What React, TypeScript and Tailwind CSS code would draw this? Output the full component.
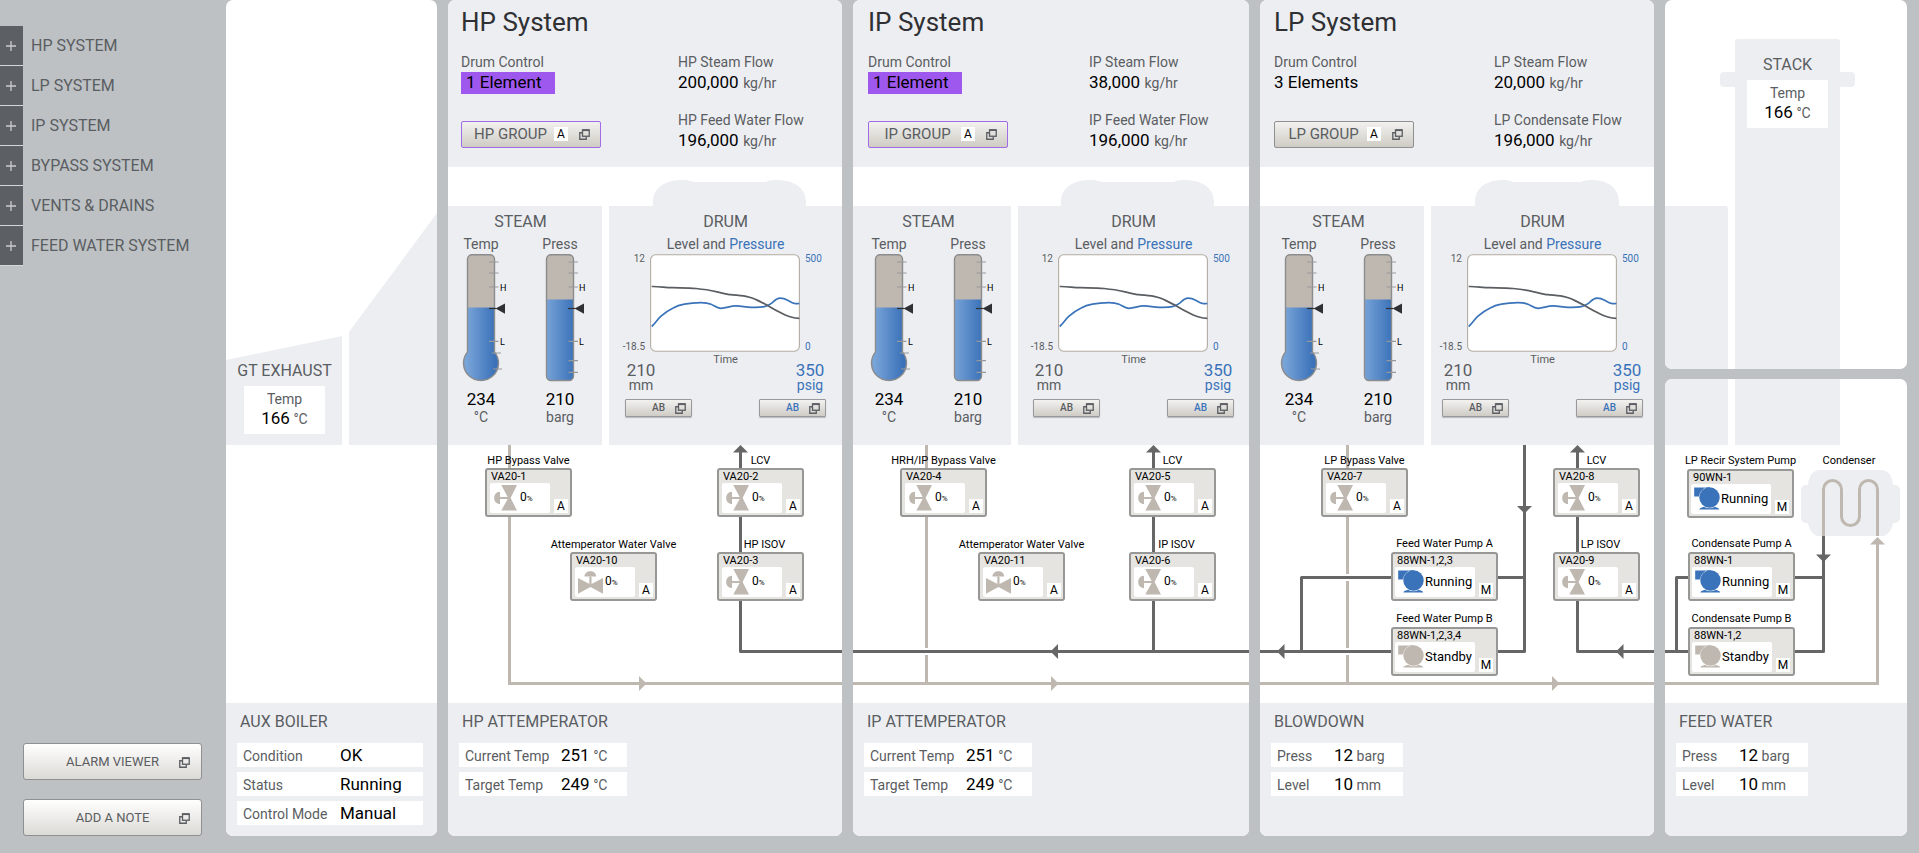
import { useId, type ReactNode } from "react";

const NAV = ["HP SYSTEM", "LP SYSTEM", "IP SYSTEM", "BYPASS SYSTEM", "VENTS & DRAINS", "FEED WATER SYSTEM"];

const TAN = "#bfb8b0";
const DARK = "#666667";
const BLUE = "#3a73b9";

/* ---------- icons ---------- */

function PopOut({ className = "size-[11px]" }: { className?: string }) {
  return (
    <svg viewBox="0 0 10 10" className={className} fill="none" stroke="#5c5f64" aria-hidden="true">
      <rect x="3.2" y="0.8" width="6.1" height="5.8" strokeWidth="1.2" />
      <path d="M3.2 1.1H9.3" strokeWidth="1.6" />
      <path d="M3 3.4H0.7V9.3H6.6V7" strokeWidth="1.2" />
    </svg>
  );
}

function ValveUpright() {
  return (
    <svg viewBox="0 0 23 26" className="ml-1 h-[26px] w-[23px] shrink-0" fill={TAN} aria-hidden="true">
      <path d="M7.3 0H23L16.6 12.9L23 25.6H7.3L14.2 12.9Z" />
      <path d="M6 6.8V19C2.4 18.8 0.2 16.4 0.2 12.9S2.4 7 6 6.8Z" />
      <path d="M6 12H15V14H6Z" />
    </svg>
  );
}

function ValveFlat() {
  return (
    <svg viewBox="0 0 25 23" className="ml-[3px] h-[23px] w-[25px] shrink-0" fill={TAN} aria-hidden="true">
      <path d="M0 7L12.5 13.6L25 7V22.8L12.5 16L0 22.8Z" />
      <path d="M6.4 5.6C6.6 2.2 9 0.2 12.4 0.2S18 2.2 18.2 5.6Z" />
      <path d="M11.3 5.6H13.5V15H11.3Z" />
    </svg>
  );
}

function PumpIcon({ on }: { on: boolean }) {
  return (
    <svg viewBox="0 0 26 23" className="ml-[3px] h-[23px] w-[26px] shrink-0" fill={on ? BLUE : TAN} aria-hidden="true">
      <path d="M0.2 0.4H15L6 9.4H0.2Z" />
      <path d="M5.4 22.4C5.4 21.2 8 20.6 10.6 19.6H20C22.6 20.6 25.2 21.2 25.2 22.4Z" />
      <circle cx="15.4" cy="10.7" r="10.6" fill="#ffffff" fillOpacity="0.8" />
      <circle cx="15.5" cy="10.5" r="10.2" />
      <path d="M12 0.4H16V2H12Z" />
    </svg>
  );
}

/* ---------- building blocks ---------- */

function Panel({ children, className = "" }: { children: ReactNode; className?: string }) {
  return <section className={`flex min-w-0 flex-col overflow-hidden rounded-[7px] bg-white ${className}`}>{children}</section>;
}

function TempBox() {
  return (
    <div className="flex h-12 w-[81px] flex-col items-center bg-white pt-[3px]">
      <span className="text-[14px] leading-5">Temp</span>
      <span className="text-[14px] leading-[18px]">
        <b className="text-[17px] font-normal text-black">166</b> °C
      </span>
    </div>
  );
}

function Reading({ label, value, unit, width, cols }: { label: string; value: string; unit?: string; width: string; cols: string }) {
  return (
    <div className={`grid h-6 items-center bg-white pl-[6px] ${width} ${cols}`}>
      <dt className="text-[14px] leading-6">{label}</dt>
      <dd className="text-[14px] leading-6">
        <b className="text-[17px] font-normal text-black">{value}</b>
        {unit ? ` ${unit}` : ""}
      </dd>
    </div>
  );
}

function Footer({ title, children }: { title: string; children: ReactNode }) {
  return (
    <div className="min-h-[133px] bg-[#edeef2] px-[11px] pt-[5px] pb-[9px]">
      <h2 className="pl-[3px] text-[16px] leading-7">{title}</h2>
      <dl className="mt-[7px] flex flex-col gap-[5px]">{children}</dl>
    </div>
  );
}

function Gauge({ kind }: { kind: "temp" | "press" }) {
  const id = useId();
  const temp = kind === "temp";
  const level = temp ? 53.5 : 45.5;
  const outline = temp
    ? "M11.5 97.9V5A4.5 4.5 0 0 1 16 0.8H34A4.5 4.5 0 0 1 38.5 5V97.9A17.5 17.5 0 1 1 11.5 97.9Z"
    : "M11.5 5A4.5 4.5 0 0 1 16 0.8H34A4.5 4.5 0 0 1 38.5 5V122A4.5 4.5 0 0 1 34 126.5H16A4.5 4.5 0 0 1 11.5 122Z";
  return (
    <svg viewBox="0 0 50 128" className="h-32 w-[50px] overflow-visible" aria-hidden="true">
      <defs>
        <linearGradient id={`${id}g`} x1="7" x2="43" y1="0" y2="0" gradientUnits="userSpaceOnUse">
          <stop offset="0.1" stopColor="#78a4d8" />
          <stop offset="0.9" stopColor="#3a71b8" />
        </linearGradient>
        <clipPath id={`${id}c`}>
          <path d={outline} />
        </clipPath>
      </defs>
      <g clipPath={`url(#${id}c)`}>
        <rect width="50" height="128" fill={TAN} />
        <rect y={level} width="50" height="90" fill={`url(#${id}g)`} />
      </g>
      <path d={outline} fill="none" stroke="#8b8c8e" strokeWidth="1.4" />
      <path
        d={temp ? "M33 8H42.5M33 19H42.5M33 33H42.5M33 87.3H42.5M36 99H45M37 115H46" : "M33.5 8H43M33.5 19H43M33.5 33H43M33.5 87.3H43M33.5 106.6H43M33.5 118.4H43"}
        stroke="#97989a"
        strokeWidth="1.2"
      />
      <path d="M33 54.5H40" stroke="#2f3032" strokeWidth="1.2" />
      <path d="M39.5 54.5L49 49.5V59.8Z" fill="#2f3032" />
      <text x="44" y="36.5" className="fill-black text-[9px]">H</text>
      <text x="44" y="90.5" className="fill-black text-[9px]">L</text>
    </svg>
  );
}

function GaugeColumn({ kind, label, value, unit }: { kind: "temp" | "press"; label: string; value: string; unit: string }) {
  return (
    <div className="flex w-[50px] flex-col items-center">
      <span className="text-[14px] leading-5">{label}</span>
      <Gauge kind={kind} />
      <span className="mt-[7px] text-[17px] leading-5 text-black">{value}</span>
      <span className="text-[14px] leading-4">{unit}</span>
    </div>
  );
}

function TrendButton({ blue }: { blue?: boolean }) {
  return (
    <button
      type="button"
      className="grid h-[18px] w-[67px] grid-cols-[1fr_auto_1fr] items-center rounded-[1px] border border-[#99989a] bg-linear-to-b from-[#f3f2f0] to-[#cfccc6] px-[5px] shadow-[0_1px_1px_#b9b9bb]"
    >
      <span />
      <span className={`text-[10px] leading-4 font-medium ${blue ? "text-[#3a73b9]" : ""}`}>AB</span>
      <PopOut className="size-[11px] justify-self-end" />
    </button>
  );
}

function Drum() {
  return (
    <div className="flex flex-1 flex-col items-center bg-[#edeef2] pt-1 pb-7">
      <h3 className="text-[16px] leading-6">DRUM</h3>
      <p className="text-[14px] leading-5">
        Level and <span className="text-[#3a73b9]">Pressure</span>
      </p>
      <div className="grid w-[201px] grid-cols-[20px_150px_21px] gap-x-[5px] text-[10px] leading-[10px]">
        <div className="flex flex-col items-end justify-between">
          <span>12</span>
          <span>-18.5</span>
        </div>
        <svg viewBox="0 0 150 98" className="h-[98px] w-[150px]" fill="none" role="img" aria-label="Level and pressure over time">
          <rect x="0.6" y="0.8" width="148.8" height="96.4" rx="5" fill="#ffffff" stroke="#b3aca1" strokeWidth="1.1" />
          <path
            d="M1.7 72.5C4.5 70 7.5 65.3 11 62.2C14.5 59 18.5 56.2 22.7 54.2C26.5 52.2 30 51 34.3 50.2C40 49 46 48.6 51 48.6C55 48.6 58 48.9 61 50.2C64.5 51.8 67 54.2 71 54.3C76 54.4 80 51.9 86 51.9C91 51.9 96 53.2 101 53.3C106 53.4 110 53.6 114.3 52.6C117 52 119 51 121 49.6C124 47.5 126 44.3 130 44.2C133.5 44.1 135.5 45.1 137.7 46.2C140 47.4 142 48.8 144.3 49.3C146 49.6 148 49.6 149.4 49.5"
            stroke="#3a73b9"
            strokeWidth="1.7"
          />
          <path
            d="M1.7 32.5C9 32.3 15 33.6 22.7 33.7C31 33.9 38 33.6 46 34.5C53 35.2 60 36.2 66 37.6C71 38.6 76 40.3 81 40.7C86 41 91 41.2 96 42.3C100 43.1 103 44.1 106 45.6C110 47.4 114 49.6 117.7 51.6C121.5 53.8 125 56 129.3 58C133 60 137 62 141 63C144 64 147 64.3 149.3 64.3"
            stroke="#5a5d61"
            strokeWidth="1.7"
          />
        </svg>
        <div className="flex flex-col justify-between text-[#3a73b9]">
          <span>500</span>
          <span>0</span>
        </div>
      </div>
      <div className="flex w-[201px] justify-between">
        <div className="flex w-8 flex-col items-center pt-[10px]">
          <span className="text-[17px] leading-4">210</span>
          <span className="text-[14px] leading-[14px]">mm</span>
        </div>
        <span className="text-[11px] leading-4">Time</span>
        <div className="flex w-8 flex-col items-center pt-[10px] text-[#3a73b9]">
          <span className="text-[17px] leading-4">350</span>
          <span className="text-[14px] leading-[14px]">psig</span>
        </div>
      </div>
      <div className="mt-[7px] flex w-[201px] justify-between">
        <TrendButton />
        <TrendButton blue />
      </div>
    </div>
  );
}

type SystemProps = {
  code: string;
  elements: string;
  alert?: boolean;
  steam: string;
  feedLabel: string;
  feed: string;
  headerCols: string;
  bodyCols: string;
  steamPad: string;
  bump: string;
  diagram: ReactNode;
  footer: ReactNode;
};

function Flow({ label, value }: { label: string; value: string }) {
  return (
    <div>
      <dt className="text-[14px] leading-5">{label}</dt>
      <dd className="text-[14px] leading-5">
        <b className="mr-px text-[17px] leading-5 font-normal text-black">{value}</b> kg/hr
      </dd>
    </div>
  );
}

function SystemPanel(p: SystemProps) {
  return (
    <Panel>
      <header className={`min-h-[167px] bg-[#edeef2] pt-[6px] ${p.headerCols}`}>
        <h1 className="col-span-2 mb-[14px] h-8 text-[26px] leading-8 text-[#2f3033]">{p.code} System</h1>
        <div className="flex flex-col items-start">
          <span className="text-[14px] leading-5">Drum Control</span>
          <span className={`h-[22px] text-[17px] leading-5 text-black ${p.alert ? "w-[94px] bg-[#9f58ee] pl-[5px]" : ""}`}>{p.elements}</span>
          <button
            type="button"
            className={`mt-[27px] flex h-[27px] w-[140px] items-center rounded-[2px] border bg-linear-to-b from-[#f2f1ef] to-[#cfccc5] pr-[10px] pb-px pl-[5px] ${
              p.alert ? "border-[#a16be8]" : "border-[#8f9092]"
            }`}
          >
            <span className="flex-1 text-[15px] leading-6">{p.code} GROUP</span>
            <span className="w-[14px] bg-white text-[12px] leading-[14px] text-black">A</span>
            <PopOut className="ml-[11px] size-[11px]" />
          </button>
        </div>
        <dl className="flex flex-col gap-[17px]">
          <Flow label={`${p.code} Steam Flow`} value={p.steam} />
          <Flow label={p.feedLabel} value={p.feed} />
        </dl>
      </header>
      <div className={`grid gap-x-[7px] ${p.bodyCols}`}>
        <div className={`mt-[39px] bg-[#edeef2] pt-1 pb-5 ${p.steamPad}`}>
          <div className="flex w-[129px] flex-col items-center">
            <h3 className="text-[16px] leading-6">STEAM</h3>
            <div className="flex w-full justify-between">
              <GaugeColumn kind="temp" label="Temp" value="234" unit="°C" />
              <GaugeColumn kind="press" label="Press" value="210" unit="barg" />
            </div>
          </div>
        </div>
        <div className="flex flex-col">
          <div className="flex h-[39px] items-end justify-center pl-2">
            <svg viewBox="0 0 153 26" preserveAspectRatio="none" className={`h-[26px] ${p.bump}`} aria-hidden="true">
              <path d="M0 26V22C0 8 12 0.3 28 0C34 0 38 0.6 40 2H113C115 0.6 119 0 125 0C141 0.3 153 8 153 22V26Z" fill="#edeef2" />
            </svg>
          </div>
          <Drum />
        </div>
      </div>
      {p.diagram}
      {p.footer}
    </Panel>
  );
}

/* ---------- process diagram ---------- */

function Canvas({ pipes, children }: { pipes: ReactNode; children: ReactNode }) {
  return (
    <div className="relative h-[258px] overflow-hidden">
      <svg className="absolute inset-0 size-full" fill="none" strokeWidth="3" aria-hidden="true">
        {pipes}
      </svg>
      {children}
    </div>
  );
}

type NodeProps = { pos: string; label: string; tag: string; labelPad?: string };

function Valve({ pos, label, tag, flat, labelPad = "" }: NodeProps & { flat?: boolean }) {
  return (
    <div className={`absolute flex w-[87px] flex-col items-center ${pos}`}>
      <span className={`text-[11px] leading-[15px] whitespace-nowrap text-black ${labelPad}`}>{label}</span>
      <button type="button" className="grid h-[49px] w-full grid-cols-[60px_14px] grid-rows-[13px_30px] content-start justify-between rounded-[3px] border-2 border-[#979795] bg-[#e5e4e0] pr-[2px] pl-[3px] text-left text-black">
        <span className="col-span-2 pl-px text-[11px] leading-[13px]">{tag}</span>
        <span className="flex items-center rounded-[2px] bg-white">
          {flat ? <ValveFlat /> : <ValveUpright />}
          <span className={`text-[12px] leading-4 ${flat ? "ml-[2px]" : "ml-[3px]"}`}>
            0<small className="text-[8px]">%</small>
          </span>
        </span>
        <span className="self-end bg-white text-center text-[12px] leading-[14px]">A</span>
      </button>
    </div>
  );
}

function Pump({ pos, label, tag, on }: NodeProps & { on: boolean }) {
  return (
    <div className={`absolute flex w-[107px] flex-col items-center ${pos}`}>
      <span className="mb-px text-[11px] leading-[15px] whitespace-nowrap text-black">{label}</span>
      <button type="button" className="grid h-[49px] w-full grid-cols-[80px_14px] grid-rows-[13px_30px] content-start justify-between rounded-[3px] border-2 border-[#979795] bg-[#e5e4e0] pr-[3px] pl-[2px] text-left text-black">
        <span className="col-span-2 pl-[2px] text-[11px] leading-[13px]">{tag}</span>
        <span className="flex items-center rounded-[2px] bg-white pb-px">
          <PumpIcon on={on} />
          <span className="ml-px text-[13px] leading-4">{on ? "Running" : "Standby"}</span>
        </span>
        <span className="self-end bg-white text-center text-[12px] leading-[14px]">M</span>
      </button>
    </div>
  );
}

function HpDiagram() {
  return (
    <Canvas
      pipes={
        <>
          <path d="M61.5 0V238.5H3000" stroke={TAN} />
          <path d="M191 231L198.5 238.5L191 246Z" fill={TAN} />
          <path d="M292.5 4V206.5H3000" stroke={DARK} strokeLinejoin="round" />
          <path d="M292.5 0L300 7.5H285Z" fill={DARK} />
        </>
      }
    >
      <Valve pos="left-[37px] top-[8px]" label="HP Bypass Valve" tag="VA20-1" />
      <Valve pos="left-[122px] top-[92px]" label="Attemperator Water Valve" tag="VA20-10" flat />
      <Valve pos="left-[269px] top-[8px]" label="LCV" tag="VA20-2" />
      <Valve pos="left-[269px] top-[92px]" label="HP ISOV" tag="VA20-3" labelPad="pl-[8px]" />
    </Canvas>
  );
}

function IpDiagram() {
  return (
    <Canvas
      pipes={
        <>
          <path d="M73.5 0V203M73.5 210V238M0 238.5H3000" stroke={TAN} />
          <path d="M198 231L205.5 238.5L198 246Z" fill={TAN} />
          <path d="M0 206.5H3000M300.5 4V206" stroke={DARK} />
          <path d="M300.5 0L308 7.5H293Z" fill={DARK} />
          <path d="M205 199V214L197.5 206.5Z" fill={DARK} />
        </>
      }
    >
      <Valve pos="left-[47px] top-[8px]" label="HRH/IP Bypass Valve" tag="VA20-4" />
      <Valve pos="left-[125px] top-[92px]" label="Attemperator Water Valve" tag="VA20-11" flat />
      <Valve pos="left-[276px] top-[8px]" label="LCV" tag="VA20-5" />
      <Valve pos="left-[276px] top-[92px]" label="IP ISOV" tag="VA20-6" labelPad="pl-[8px]" />
    </Canvas>
  );
}

function LpDiagram() {
  return (
    <Canvas
      pipes={
        <>
          <path d="M87.5 0V129M87.5 136V203M87.5 210V238M0 238.5H3000" stroke={TAN} />
          <path d="M292 231L299.5 238.5L292 246Z" fill={TAN} />
          <path d="M0 206.5H264.5V0M41.5 206V132.5H264M317.5 4V206.5H3000" stroke={DARK} strokeLinejoin="round" />
          <path d="M317.5 0L325 7.5H310Z" fill={DARK} />
          <path d="M257 61H272L264.5 68.5Z" fill={DARK} />
          <path d="M24.5 199V214L17 206.5Z" fill={DARK} />
          <path d="M363.5 199V214L356 206.5Z" fill={DARK} />
        </>
      }
    >
      <Valve pos="left-[61px] top-[8px]" label="LP Bypass Valve" tag="VA20-7" />
      <Pump pos="left-[131px] top-[91px]" label="Feed Water Pump A" tag="88WN-1,2,3" on />
      <Pump pos="left-[131px] top-[166px]" label="Feed Water Pump B" tag="88WN-1,2,3,4" on={false} />
      <Valve pos="left-[293px] top-[8px]" label="LCV" tag="VA20-8" />
      <Valve pos="left-[293px] top-[92px]" label="LP ISOV" tag="VA20-9" labelPad="pl-[8px]" />
    </Canvas>
  );
}

function CondenserDiagram() {
  return (
    <Canvas
      pipes={
        <>
          <rect x="136" y="40" width="99" height="38" rx="5" fill="#edeef2" />
          <path d="M153 25H218C225 27 227 32 228 40V78C227 84 224 89 219 91H152C147 89 144 84 143 78V40C144 32 146 27 153 25Z" fill="#edeef2" />
          <path d="M158.5 91V44.5A9 9 0 0 1 176.5 44.5V71.5A9 9 0 0 0 194.5 71.5V44.5A9 9 0 0 1 212.5 44.5V91" stroke={TAN} />
          <path d="M0 238.5H212.5V98" stroke={TAN} />
          <path d="M212.5 92L220 99.5H205Z" fill={TAN} />
          <path d="M158.5 91V206.5H0M158.5 132.5H11.5V206" stroke={DARK} strokeLinejoin="round" />
          <path d="M151 109.5H166L158.5 117Z" fill={DARK} />
        </>
      }
    >
      <Pump pos="left-[22px] top-[8px]" label="LP Recir System Pump" tag="90WN-1" on />
      <Pump pos="left-[23px] top-[91px]" label="Condensate Pump A" tag="88WN-1" on />
      <Pump pos="left-[23px] top-[166px]" label="Condensate Pump B" tag="88WN-1,2" on={false} />
      <span className="absolute top-[8px] left-[136px] w-[96px] text-center text-[11px] leading-[15px] text-black">Condenser</span>
    </Canvas>
  );
}

/* ---------- page ---------- */

function SideButton({ children }: { children: ReactNode }) {
  return (
    <button
      type="button"
      className="grid h-[37px] w-[179px] grid-cols-[1fr_auto_1fr] items-center rounded-[3px] border border-[#8f9092] bg-linear-to-b from-white to-[#dcdad5] px-[11px] pt-px"
    >
      <span />
      <span className="text-[13px] leading-5">{children}</span>
      <PopOut className="size-[11px] justify-self-end" />
    </button>
  );
}

const WIDE = { width: "w-[168px]", cols: "grid-cols-[96px_1fr]" };
const NARROW = { width: "w-[132px]", cols: "grid-cols-[57px_1fr]" };
const AUX = { width: "w-full max-w-[186px]", cols: "grid-cols-[97px_1fr]" };

export default function App() {
  return (
    <div className="flex min-h-screen items-start bg-[#bdc1c4] pr-3 pb-[17px] font-['Roboto',sans-serif] text-[#5a5d61]">
      <aside className="flex w-[226px] shrink-0 flex-col justify-between self-stretch pt-[26px]">
        <nav>
          <ul className="flex flex-col gap-px">
            {NAV.map((name) => (
              <li key={name}>
                <button type="button" className="flex h-[39px] items-center gap-2 text-[16px]">
                  <span className="flex h-full w-[23px] items-center justify-center bg-[#5c5f64] pr-px shadow-[0_1px_0_#d5d8da]">
                    <svg viewBox="0 0 10 10" className="size-[10px]" stroke="#c9cccf" strokeWidth="1.3" aria-hidden="true">
                      <path d="M0 5H10M5 0V10" />
                    </svg>
                  </span>
                  {name}
                </button>
              </li>
            ))}
          </ul>
        </nav>
        <div className="flex flex-col gap-[19px] pl-[23px]">
          <SideButton>ALARM VIEWER</SideButton>
          <SideButton>ADD A NOTE</SideButton>
        </div>
      </aside>

      <main className="grid min-w-[1681px] flex-1 grid-cols-[211fr_394fr_396fr_394fr_242fr] gap-x-[11px]">
        <Panel className="justify-between">
          <div className="relative flex h-[445px] flex-col justify-end">
            <svg viewBox="0 0 211 445" preserveAspectRatio="none" className="absolute inset-0 size-full" fill="#edeef2" aria-hidden="true">
              <path d="M0 360L116 336V445H0ZM123 332L211 213V445H123Z" />
            </svg>
            <div className="relative flex w-[117px] flex-col items-center gap-[3px] pb-[11px]">
              <h2 className="text-[16px] leading-6">GT EXHAUST</h2>
              <TempBox />
            </div>
          </div>
          <Footer title="AUX BOILER">
            <Reading label="Condition" value="OK" {...AUX} />
            <Reading label="Status" value="Running" {...AUX} />
            <Reading label="Control Mode" value="Manual" {...AUX} />
          </Footer>
        </Panel>

        <SystemPanel
          code="HP"
          elements="1 Element"
          alert
          steam="200,000"
          feedLabel="HP Feed Water Flow"
          feed="196,000"
          headerCols="grid grid-cols-[217px_1fr] content-start pl-[13px]"
          bodyCols="grid-cols-[154px_1fr]"
          steamPad="pl-2"
          bump="w-[153px]"
          diagram={<HpDiagram />}
          footer={
            <Footer title="HP ATTEMPERATOR">
              <Reading label="Current Temp" value="251" unit="°C" {...WIDE} />
              <Reading label="Target Temp" value="249" unit="°C" {...WIDE} />
            </Footer>
          }
        />
        <SystemPanel
          code="IP"
          elements="1 Element"
          alert
          steam="38,000"
          feedLabel="IP Feed Water Flow"
          feed="196,000"
          headerCols="grid grid-cols-[221px_1fr] content-start pl-[15px]"
          bodyCols="grid-cols-[158px_1fr]"
          steamPad="pl-[11px]"
          bump="w-[153px]"
          diagram={<IpDiagram />}
          footer={
            <Footer title="IP ATTEMPERATOR">
              <Reading label="Current Temp" value="251" unit="°C" {...WIDE} />
              <Reading label="Target Temp" value="249" unit="°C" {...WIDE} />
            </Footer>
          }
        />
        <SystemPanel
          code="LP"
          elements="3 Elements"
          steam="20,000"
          feedLabel="LP Condensate Flow"
          feed="196,000"
          headerCols="grid grid-cols-[220px_1fr] content-start pl-[14px]"
          bodyCols="grid-cols-[164px_1fr]"
          steamPad="pl-[14px]"
          bump="w-[144px]"
          diagram={<LpDiagram />}
          footer={
            <Footer title="BLOWDOWN">
              <Reading label="Press" value="12" unit="barg" {...NARROW} />
              <Reading label="Level" value="10" unit="mm" {...NARROW} />
            </Footer>
          }
        />

        <div className="flex flex-col gap-[10px]">
          <Panel>
            <div className="flex h-[369px] items-end gap-[7px]">
              <div className="h-[163px] w-[63px] rounded-tr-[3px] bg-[#edeef2]" />
              <div className="relative flex h-[330px] w-[105px] flex-col items-center rounded-t-[3px] bg-[#edeef2] pt-[14px]">
                <span className="absolute top-[33px] -left-[15px] h-[15px] w-[135px] rounded-[4px] bg-[#edeef2]" />
                <h2 className="relative text-[16px] leading-6">STACK</h2>
                <div className="relative mt-[3px]">
                  <TempBox />
                </div>
              </div>
            </div>
          </Panel>
          <Panel className="flex-1">
            <div className="flex h-[66px] gap-[7px]">
              <div className="w-[63px] bg-[#edeef2]" />
              <div className="w-[105px] bg-[#edeef2]" />
            </div>
            <CondenserDiagram />
            <Footer title="FEED WATER">
              <Reading label="Press" value="12" unit="barg" {...NARROW} />
              <Reading label="Level" value="10" unit="mm" {...NARROW} />
            </Footer>
          </Panel>
        </div>
      </main>
    </div>
  );
}
